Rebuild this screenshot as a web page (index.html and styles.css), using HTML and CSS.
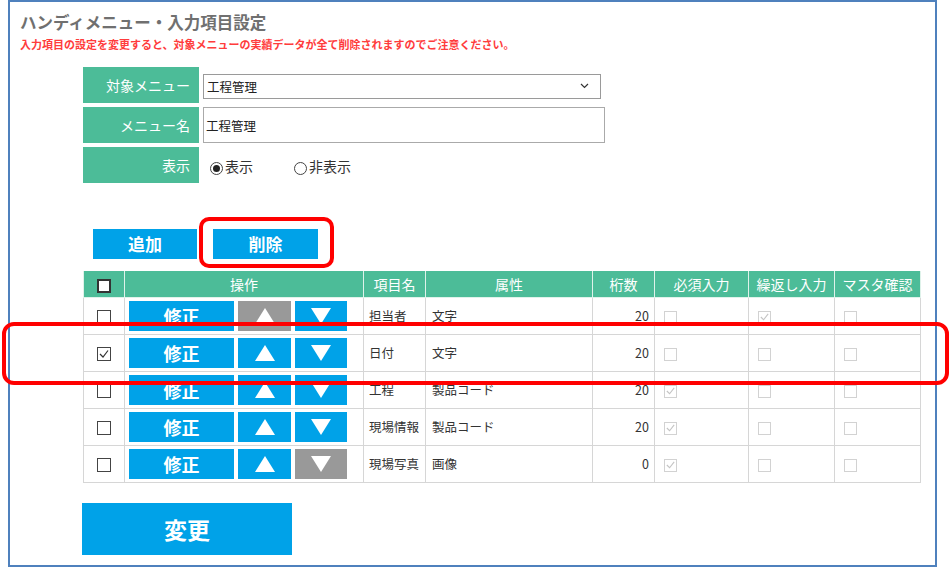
FILE: index.html
```html
<!DOCTYPE html>
<html lang="ja">
<head>
  <meta charset="UTF-8">
  <title>ハンディメニュー・入力項目設定</title>
  <meta name="viewport" content="width=device-width, initial-scale=1.0">
  <link rel="stylesheet" href="styles.css">
</head>
<body>

  <div class="frame">

    <div class="page-head">
      <h1>ハンディメニュー・入力項目設定</h1>
      <p class="notice">入力項目の設定を変更すると、対象メニューの実績データが全て削除されますのでご注意ください。</p>
    </div>

    <div class="form">
      <div class="form-label">対象メニュー</div>
      <div class="form-field">
        <div class="select-box">
          <select class="select">
            <option>工程管理</option>
          </select>
          <svg class="select-arrow" width="9" height="6" viewBox="0 0 9 6"><polyline points="1,1 4.5,4.5 8,1" fill="none" stroke="#333" stroke-width="1.2"/></svg>
        </div>
      </div>

      <div class="form-label">メニュー名</div>
      <div class="form-field">
        <input type="text" class="text-input" value="工程管理">
      </div>

      <div class="form-label">表示</div>
      <div class="form-field radios">
        <label class="radio"><span class="radio-dot checked"></span>表示</label>
        <label class="radio"><span class="radio-dot"></span>非表示</label>
      </div>
    </div>

    <div class="toolbar">
      <button class="btn tool-btn">追加</button>
      <span class="mark-wrap">
        <button class="btn tool-btn">削除</button>
        <span class="mark mark-small"></span>
      </span>
    </div>

    <table class="items">
      <colgroup>
        <col style="width:41px">
        <col style="width:239px">
        <col style="width:62px">
        <col style="width:167px">
        <col style="width:62px">
        <col style="width:94px">
        <col style="width:86px">
        <col style="width:86px">
      </colgroup>
      <thead>
        <tr>
          <th><span class="cb head-cb"></span></th>
          <th>操作</th>
          <th>項目名</th>
          <th>属性</th>
          <th>桁数</th>
          <th>必須入力</th>
          <th>繰返し入力</th>
          <th>マスタ確認</th>
        </tr>
      </thead>
      <tbody id="itemRows">
        <!-- rows are built by the script below -->
      </tbody>
    </table>

    <button class="btn submit-btn">変更</button>

    <div class="mark mark-row"></div>
  </div>

  <script>
    const items = [
      { name: '担当者', type: '文字', digits: 20, required: false, repeat: true, master: false },
      { name: '日付', type: '文字', digits: 20, required: false, repeat: false, master: false, selected: true },
      { name: '工程', type: '製品コード', digits: 20, required: true, repeat: false, master: false },
      { name: '現場情報', type: '製品コード', digits: 20, required: true, repeat: false, master: false },
      { name: '現場写真', type: '画像', digits: 0, required: true, repeat: false, master: false }
    ];

    const check = '<svg width="12" height="12" viewBox="0 0 12 12"><polyline points="2,6 5,9 10,2.5" fill="none" stroke="currentColor" stroke-width="1.2"/></svg>';
    const up = '<svg width="20" height="16" viewBox="0 0 20 16"><polygon points="10,0 20,16 0,16" fill="#fff"/></svg>';
    const down = '<svg width="20" height="16" viewBox="0 0 20 16"><polygon points="0,0 20,0 10,16" fill="#fff"/></svg>';

    function box(on, cls) {
      return `<span class="cb ${cls}">${on ? check : ''}</span>`;
    }

    const body = document.getElementById('itemRows');

    items.forEach((item, i) => {
      const first = i === 0;
      const last = i === items.length - 1;
      const row = document.createElement('tr');
      row.innerHTML = `
        <td class="center">${box(item.selected, 'row-cb')}</td>
        <td class="ops">
          <div class="ops-inner">
            <button class="btn edit-btn">修正</button>
            <button class="btn move-btn up ${first ? 'off' : ''}">${up}</button>
            <button class="btn move-btn down ${last ? 'off' : ''}">${down}</button>
          </div>
        </td>
        <td>${item.name}</td>
        <td class="type">${item.type}</td>
        <td class="num">${item.digits}</td>
        <td class="flag">${box(item.required, 'dis-cb')}</td>
        <td class="flag">${box(item.repeat, 'dis-cb')}</td>
        <td class="flag">${box(item.master, 'dis-cb')}</td>
      `;
      body.appendChild(row);
    });
  </script>
</body>
</html>
```

FILE: styles.css
```css
:root {
  --green: #4cbc98;
  --blue: #00a2e8;
  --gray-btn: #999999;
  --line: #d6d6d6;
  --frame: #4f81bd;
  --mark: #ff0000;
}

* {
  box-sizing: border-box;
}

body {
  margin: 0;
  font-family: "Noto Sans CJK JP", "Noto Sans", sans-serif;
  color: #333;
  background: #fff;
}

.frame {
  position: relative;
  margin-left: 8px;
  width: 929px;
  height: 567px;
  border: 2px solid var(--frame);
}

/* heading */
.page-head {
  padding: 8px 0 0 10px;
}

h1 {
  margin: 0;
  font-size: 16.5px;
  line-height: 24px;
  font-weight: bold;
  color: #707070;
}

.notice {
  margin: 2px 0 0;
  font-size: 11px;
  line-height: 16px;
  font-weight: bold;
  color: #ff3c3c;
}

/* form */
.form {
  display: grid;
  grid-template-columns: 116px 1fr;
  grid-auto-rows: 36px;
  row-gap: 4px;
  column-gap: 4px;
  margin: 15px 0 0 73px;
  width: 522px;
}

.form-label {
  background: var(--green);
  color: #fff;
  font-size: 14px;
  line-height: 36px;
  text-align: right;
  padding-right: 9px;
}

.form-field {
  display: flex;
  align-items: center;
}

.select-box {
  position: relative;
  width: 398px;
  height: 25px;
}

.select {
  appearance: none;
  width: 100%;
  height: 25px;
  border: 1px solid #9a9a9a;
  background: #fff;
  font-family: inherit;
  font-size: 12.5px;
  color: #222;
  padding: 0 0 0 3px;
  border-radius: 0;
}

.select-arrow {
  position: absolute;
  right: 12px;
  top: 10px;
}

.text-input {
  width: 402px;
  height: 36px;
  border: 1px solid #aaa;
  font-family: inherit;
  font-size: 12.5px;
  color: #222;
  padding: 0 2px;
}

.radios {
  gap: 41px;
  padding: 2px 0 0 7px;
}

.radio {
  display: flex;
  align-items: center;
  gap: 2px;
  font-size: 14px;
  line-height: 20px;
  color: #333;
}

.radio-dot {
  width: 13px;
  height: 13px;
  border: 1px solid #444;
  border-radius: 50%;
  display: flex;
  align-items: center;
  justify-content: center;
  margin-top: 5px;
}

.radio-dot.checked::after {
  content: "";
  width: 7px;
  height: 7px;
  border-radius: 50%;
  background: #222;
}

/* buttons */
.btn {
  border: none;
  padding: 0;
  margin: 0;
  color: #fff;
  background: var(--blue);
  font-family: inherit;
  font-weight: bold;
  cursor: pointer;
}

.toolbar {
  display: flex;
  gap: 16px;
  margin: 46px 0 0 83px;
}

.tool-btn {
  width: 104px;
  height: 30px;
  font-size: 17px;
  line-height: 30px;
}

.mark-wrap {
  position: relative;
  display: flex;
}

.mark-wrap .tool-btn {
  width: 105px;
}

.mark {
  position: absolute;
  border: 4px solid var(--mark);
  pointer-events: none;
}

.mark-small {
  left: -14px;
  top: -12px;
  width: 135px;
  height: 51px;
  border-radius: 10px;
}

.mark-row {
  left: -8px;
  top: 320px;
  width: 947px;
  height: 63px;
  border-radius: 12px;
}

/* table */
.items {
  border-collapse: collapse;
  table-layout: fixed;
  width: 837px;
  margin: 12px 0 0 73px;
  font-size: 12.5px;
  color: #333;
}

.items th {
  height: 26px;
  padding: 0;
  background: var(--green);
  color: #fff;
  font-size: 14px;
  font-weight: normal;
  line-height: 24px;
  border: 1px solid #dff2ea;
  border-top: none;
}

.items td {
  height: 37px;
  padding: 0 5px;
  border: 1px solid var(--line);
  line-height: 16px;
}

.items td.center {
  text-align: center;
  padding: 0;
}

.items td.type {
  padding-left: 6px;
}

.items td.num {
  text-align: right;
  padding-right: 5px;
}

.items td.flag {
  padding-left: 9px;
}

.cb {
  display: inline-flex;
  align-items: center;
  justify-content: center;
  width: 14px;
  height: 14px;
  vertical-align: middle;
}

.head-cb {
  background: #fff;
  border: 2px solid #333;
}

.row-cb {
  border: 1px solid #444;
  color: #333;
}

.dis-cb {
  width: 13px;
  height: 13px;
  border: 1px solid #d2d2d2;
  color: #c4c4c4;
}

.items td.ops {
  padding: 0 4px;
}

.ops-inner {
  display: flex;
  gap: 4px;
}

.edit-btn {
  width: 105px;
  height: 30px;
  font-size: 18px;
  line-height: 30px;
}

.move-btn {
  width: 53px;
  height: 30px;
  display: flex;
  align-items: center;
  justify-content: center;
}

.move-btn.down {
  width: 52px;
}

.move-btn.off {
  background: var(--gray-btn);
}

.submit-btn {
  display: block;
  width: 210px;
  height: 52px;
  margin: 20px 0 0 72px;
  font-size: 23px;
  line-height: 52px;
}
```
